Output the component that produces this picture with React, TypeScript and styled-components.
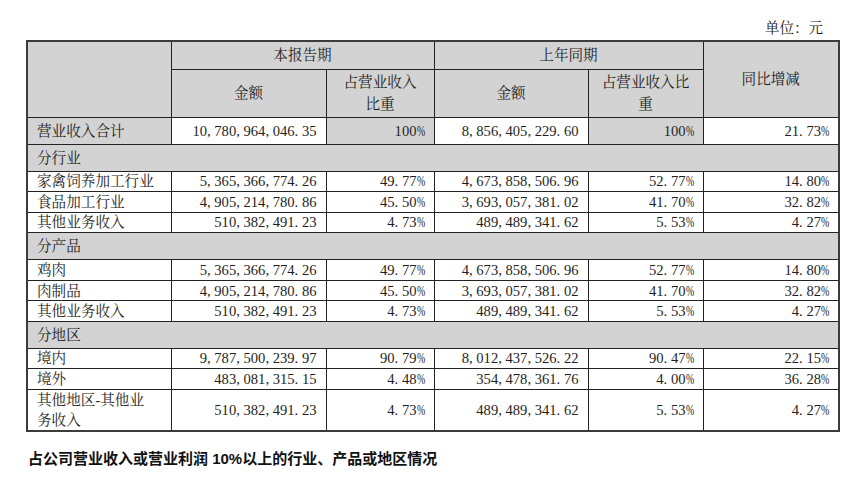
import React from 'react'
import styled, { createGlobalStyle } from 'styled-components'

const GlobalStyle = createGlobalStyle`
  html, body {
    margin: 0;
    padding: 0;
    background: #fff;
  }
`

const FONT = `'Liberation Serif', 'Noto Serif CJK SC', 'Noto Sans CJK SC', serif`
const GRAY = '#d3d3d3'

const Page = styled.div`
  width: 865px;
  height: 486px;
  box-sizing: border-box;
  padding: 19px 0 0 26px;
  font-family: ${FONT};
  color: #1e1e1e;
`

const Unit = styled.div`
  width: 797px;
  text-align: right;
  font-size: 14.5px;
  line-height: 18px;
  height: 21px;
`

const Table = styled.table`
  border-collapse: collapse;
  width: 812px;
  table-layout: fixed;
  border: 2px solid #3c3c3c;
  font-size: 14.6px;
`

const Row = styled.tr<{ $h: number }>`
  height: ${({ $h }) => $h}px;
`

const Cell = styled.td<{ $gray?: boolean; $align?: 'left' | 'right' | 'center' }>`
  border: 1px solid #222;
  padding: 0 9px 0 9px;
  background: ${({ $gray }) => ($gray ? GRAY : '#fff')};
  text-align: ${({ $align }) => $align || 'right'};
  vertical-align: middle;
  line-height: 18px;
  white-space: nowrap;
  overflow: hidden;
`

const HeadCell = styled.th<{ $pad?: number }>`
  border: 1px solid #222;
  padding: 0 ${({ $pad }) => $pad ?? 6}px;
  background: ${GRAY};
  font-weight: normal;
  text-align: center;
  vertical-align: middle;
  line-height: 22px;
`

const SectionCell = styled.td`
  border: 1px solid #222;
  background: ${GRAY};
  padding: 0 9px;
  text-align: left;
  vertical-align: middle;
  line-height: 18px;
`

const WrapLabel = styled.span`
  display: block;
  white-space: normal;
  width: 8em;
  line-height: 20px;
`

const Punct = styled.span`
  letter-spacing: 0.25em;
`

const Pct = styled.span`
  display: inline-block;
  width: 0.55em;
  transform: scaleX(0.68);
  transform-origin: left center;
`

const Footer = styled.div`
  margin-top: 15px;
  font-family: 'Liberation Sans', 'Noto Sans CJK SC', sans-serif;
  font-weight: bold;
  font-size: 15px;
  color: #111;
  padding-left: 2px;
`

// SimSun-style number: punctuation takes a half-width slot
const Num: React.FC<{ v: string }> = ({ v }) => (
  <>
    {v.split('').map((ch, i) => {
      if (ch === ',' || ch === '.') return <Punct key={i}>{ch}</Punct>
      if (ch === '%') return <Pct key={i}>{ch}</Pct>
      return <React.Fragment key={i}>{ch}</React.Fragment>
    })}
  </>
)

interface DataRow {
  label: string
  amount: string
  share: string
  lastAmount: string
  lastShare: string
  change: string
  tall?: boolean
}

const sections: { title: string; rows: DataRow[] }[] = [
  {
    title: '分行业',
    rows: [
      { label: '家禽饲养加工行业', amount: '5,365,366,774.26', share: '49.77%', lastAmount: '4,673,858,506.96', lastShare: '52.77%', change: '14.80%' },
      { label: '食品加工行业', amount: '4,905,214,780.86', share: '45.50%', lastAmount: '3,693,057,381.02', lastShare: '41.70%', change: '32.82%' },
      { label: '其他业务收入', amount: '510,382,491.23', share: '4.73%', lastAmount: '489,489,341.62', lastShare: '5.53%', change: '4.27%' },
    ],
  },
  {
    title: '分产品',
    rows: [
      { label: '鸡肉', amount: '5,365,366,774.26', share: '49.77%', lastAmount: '4,673,858,506.96', lastShare: '52.77%', change: '14.80%' },
      { label: '肉制品', amount: '4,905,214,780.86', share: '45.50%', lastAmount: '3,693,057,381.02', lastShare: '41.70%', change: '32.82%' },
      { label: '其他业务收入', amount: '510,382,491.23', share: '4.73%', lastAmount: '489,489,341.62', lastShare: '5.53%', change: '4.27%' },
    ],
  },
  {
    title: '分地区',
    rows: [
      { label: '境内', amount: '9,787,500,239.97', share: '90.79%', lastAmount: '8,012,437,526.22', lastShare: '90.47%', change: '22.15%' },
      { label: '境外', amount: '483,081,315.15', share: '4.48%', lastAmount: '354,478,361.76', lastShare: '4.00%', change: '36.28%' },
      { label: '其他地区-其他业务收入', amount: '510,382,491.23', share: '4.73%', lastAmount: '489,489,341.62', lastShare: '5.53%', change: '4.27%', tall: true },
    ],
  },
]

const App: React.FC = () => (
  <Page>
    <GlobalStyle />
    <Unit>单位：元</Unit>
    <Table>
      <colgroup>
        <col style={{ width: 144 }} />
        <col style={{ width: 155 }} />
        <col style={{ width: 108 }} />
        <col style={{ width: 154 }} />
        <col style={{ width: 115 }} />
        <col style={{ width: 136 }} />
      </colgroup>
      <thead>
        <Row $h={28}>
          <HeadCell rowSpan={2} />
          <HeadCell colSpan={2}>本报告期</HeadCell>
          <HeadCell colSpan={2}>上年同期</HeadCell>
          <HeadCell rowSpan={2}>同比增减</HeadCell>
        </Row>
        <Row $h={48}>
          <HeadCell>金额</HeadCell>
          <HeadCell $pad={12}>占营业收入比重</HeadCell>
          <HeadCell>金额</HeadCell>
          <HeadCell>占营业收入比重</HeadCell>
        </Row>
      </thead>
      <tbody>
        <Row $h={27}>
          <Cell $gray $align="left">营业收入合计</Cell>
          <Cell><Num v="10,780,964,046.35" /></Cell>
          <Cell $gray><Num v="100%" /></Cell>
          <Cell><Num v="8,856,405,229.60" /></Cell>
          <Cell $gray><Num v="100%" /></Cell>
          <Cell><Num v="21.73%" /></Cell>
        </Row>
        {sections.map((s, si) => (
          <React.Fragment key={s.title}>
            <Row $h={si === 2 ? 26.5 : 27}>
              <SectionCell colSpan={6}>{s.title}</SectionCell>
            </Row>
            {s.rows.map(r => (
              <Row key={r.label} $h={r.tall ? 41 : 20.6}>
                <Cell $align="left">
                  {r.tall ? <WrapLabel>{r.label}</WrapLabel> : r.label}
                </Cell>
                <Cell><Num v={r.amount} /></Cell>
                <Cell><Num v={r.share} /></Cell>
                <Cell><Num v={r.lastAmount} /></Cell>
                <Cell><Num v={r.lastShare} /></Cell>
                <Cell><Num v={r.change} /></Cell>
              </Row>
            ))}
          </React.Fragment>
        ))}
      </tbody>
    </Table>
    <Footer>占公司营业收入或营业利润 10%以上的行业、产品或地区情况</Footer>
  </Page>
)

export default App
